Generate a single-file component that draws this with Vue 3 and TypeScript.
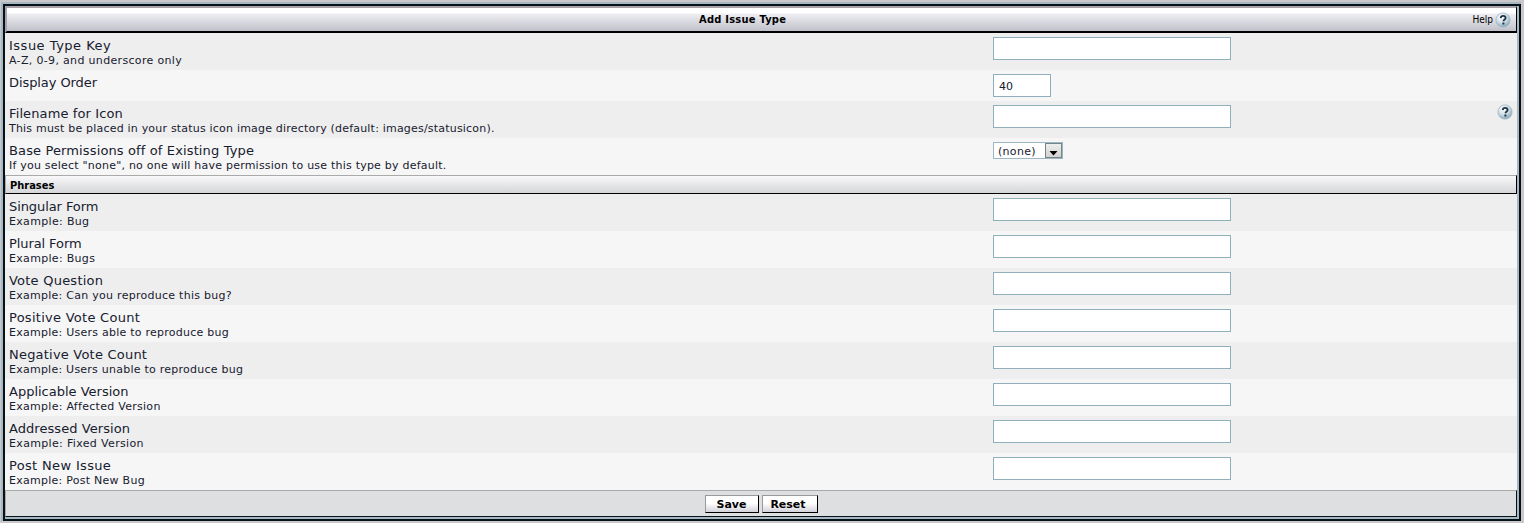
<script setup lang="ts">
interface Field {
  label: string
  labelTrack: number
  note?: string
  noteTrack?: number
  kind?: 'short' | 'select'
  help?: boolean
}

// Track values are letter spacing in pixels.
const settings: Field[] = [
  { label: 'Issue Type Key', labelTrack: 0.5, note: 'A-Z, 0-9, and underscore only', noteTrack: 0.33 },
  { label: 'Display Order', labelTrack: -0.08, kind: 'short' },
  { label: 'Filename for Icon', labelTrack: 0.12, note: 'This must be placed in your status icon image directory (default: images/statusicon).', noteTrack: 0.2, help: true },
  { label: 'Base Permissions off of Existing Type', labelTrack: 0.13, note: 'If you select "none", no one will have permission to use this type by default.', noteTrack: 0.22, kind: 'select' },
]

const phrases: Field[] = [
  { label: 'Singular Form', labelTrack: -0.08, note: 'Example: Bug', noteTrack: 0.33 },
  { label: 'Plural Form', labelTrack: -0.09, note: 'Example: Bugs', noteTrack: 0.31 },
  { label: 'Vote Question', labelTrack: 0.23, note: 'Example: Can you reproduce this bug?', noteTrack: 0.27 },
  { label: 'Positive Vote Count', labelTrack: 0.27, note: 'Example: Users able to reproduce bug', noteTrack: 0.25 },
  { label: 'Negative Vote Count', labelTrack: 0.21, note: 'Example: Users unable to reproduce bug', noteTrack: 0.24 },
  { label: 'Applicable Version', labelTrack: 0, note: 'Example: Affected Version', noteTrack: 0.28 },
  { label: 'Addressed Version', labelTrack: 0.06, note: 'Example: Fixed Version', noteTrack: 0.34 },
  { label: 'Post New Issue', labelTrack: 0.34, note: 'Example: Post New Bug', noteTrack: 0.26 },
]

const groups = [
  { title: '', fields: settings },
  { title: 'Phrases', fields: phrases },
]
</script>

<template>
  <svg class="defs" width="0" height="0">
    <defs>
      <radialGradient id="ball" cx="0.4" cy="0.3" r="0.75">
        <stop offset="0" stop-color="#ffffff" />
        <stop offset="0.5" stop-color="#d3e0e8" />
        <stop offset="1" stop-color="#7d9fb3" />
      </radialGradient>
      <symbol id="help" viewBox="0 0 16 16">
        <circle cx="8" cy="8" r="7.1" fill="url(#ball)" stroke="#9db5c3" stroke-width="0.8" />
        <path d="M5.7 6.1C5.8 4.6 6.7 3.9 8.1 3.9c1.5 0 2.5.8 2.5 2 0 1.5-2.1 1.7-2.1 3.4" fill="none" stroke="#1d3345" stroke-width="1.8" />
        <rect x="7.4" y="10.5" width="2" height="2" fill="#1d3345" />
      </symbol>
    </defs>
  </svg>
  <div class="page">
    <form class="panel" @submit.prevent>
      <header class="title">
        <b>Add Issue Type</b>
        <span class="help">Help <svg class="icon"><use href="#help" /></svg></span>
      </header>
      <section v-for="g in groups" :key="g.title">
        <h2 v-if="g.title">{{ g.title }}</h2>
        <div v-for="f in g.fields" :key="f.label" class="row" :class="{ low: !f.note }">
          <div class="text">
            <div class="label" :style="{ letterSpacing: f.labelTrack + 'px' }">{{ f.label }}</div>
            <div v-if="f.note" class="note" :style="{ letterSpacing: f.noteTrack + 'px' }">{{ f.note }}</div>
          </div>
          <div class="control">
            <div v-if="f.kind === 'select'" class="select">
              <span>(none)</span>
              <i><svg width="9" height="5" viewBox="0 0 9 5"><path d="M0.5 0H8.5L4.5 4.5Z" /></svg></i>
            </div>
            <input v-else type="text" :class="{ short: f.kind === 'short' }" :value="f.kind === 'short' ? '40' : ''" />
          </div>
          <svg v-if="f.help" class="icon"><use href="#help" /></svg>
        </div>
      </section>
      <footer>
        <button type="submit">Save</button>
        <button type="reset">Reset</button>
      </footer>
    </form>
  </div>
</template>

<style>
html,
body {
  margin: 0;
  overflow: hidden;
  background: #cbc8cb;
}
</style>

<style scoped>
* {
  box-sizing: border-box;
}
.defs {
  display: block;
}
.page {
  width: 1524px;
  height: 523px;
  padding: 2px 3px 2px 1px;
  background: #cbc8cb;
  font-family: 'DejaVu Sans', Verdana, sans-serif;
  color: #17202f;
}
.panel {
  width: 1520px;
  height: 519px;
  border: 2px solid #a9b7c2;
  border-right: 0;
  border-bottom: 0;
  background: #a9b7c2;
  box-shadow: inset 2px 2px #04131a, inset -2px -2px #04131a;
  padding: 2px;
}
.title {
  width: 1512px;
  height: 27px;
  border-top: 2px solid #a9a2aa;
  border-left: 2px solid #a9a2aa;
  border-right: 1px solid #000;
  border-bottom: 2px solid #000;
  background: linear-gradient(#fff 0 5px, #eeeef2 6px, #bfc0ca) padding-box;
  display: flex;
  align-items: center;
  justify-content: space-between;
}
.title b {
  padding-left: 692px;
  font: bold 11px/16px 'DejaVu Sans Condensed', 'DejaVu Sans', sans-serif;
  letter-spacing: 0.25px;
  color: #000;
}
.help {
  display: flex;
  align-items: center;
  gap: 2px;
  padding-right: 5px;
  font: 10px/14px 'DejaVu Sans Condensed', 'DejaVu Sans', sans-serif;
  color: #000;
}
.icon {
  width: 16px;
  height: 16px;
  display: block;
  flex: none;
}
.row {
  width: 1512px;
  height: 37px;
  display: flex;
  padding: 4px 4px 0;
  background: #eee;
}
.row > .icon {
  margin-top: -1px;
}
.row:nth-of-type(even) {
  background: #f6f6f6;
}
.row.low {
  height: 31px;
}
.text {
  width: 984px;
  padding-top: 1px;
}
.label {
  font-size: 13px;
  line-height: 16px;
  white-space: nowrap;
}
.note {
  font-size: 11px;
  line-height: 14px;
  white-space: nowrap;
  font-variant-ligatures: none;
}
.control {
  flex: 1;
}
input {
  display: block;
  width: 238px;
  height: 23px;
  border: 1px solid #8fafbd;
  background: #fff;
  padding: 1px 5px 0;
  margin: 0;
  font: 11px 'DejaVu Sans', sans-serif;
  color: #17202f;
}
input.short {
  width: 58px;
}
.select {
  width: 70px;
  height: 17px;
  border: 1px solid #9bb6c4;
  background: #fff;
  display: flex;
  justify-content: space-between;
  align-items: center;
  padding-left: 4px;
  font-size: 11px;
  letter-spacing: 0.3px;
}
.select span {
  padding-top: 1px;
}
.select i {
  width: 17px;
  height: 15px;
  border: 1px solid #748489;
  background: linear-gradient(#eee, #d2d2d2);
  display: flex;
  justify-content: center;
  padding-top: 7px;
}
h2 {
  width: 1512px;
  height: 19px;
  margin: 0;
  padding-left: 4px;
  border: 1px solid #000;
  border-top-color: #aaa;
  border-left-color: #aaa;
  background: linear-gradient(#f9f9fa, #d5d6d9);
  font: bold 11px/19px 'DejaVu Sans Condensed', 'DejaVu Sans', sans-serif;
  color: #000;
}
footer {
  width: 1512px;
  height: 27px;
  border: 1px solid #04131a;
  border-top-color: #aaa;
  border-left-color: #aaa;
  background: #dddfe1;
  display: flex;
  justify-content: center;
  gap: 3px;
  padding-top: 4px;
}
button {
  height: 18px;
  padding: 1px 0 0;
  border: 1px solid #000;
  border-top-color: #999;
  border-left-color: #999;
  background: linear-gradient(#fff 45%, #d2d2da);
  font: bold 11px/15px 'DejaVu Sans', sans-serif;
  color: #000;
  width: 54px;
}
button:last-child {
  width: 56px;
  padding-right: 3px;
}
</style>
